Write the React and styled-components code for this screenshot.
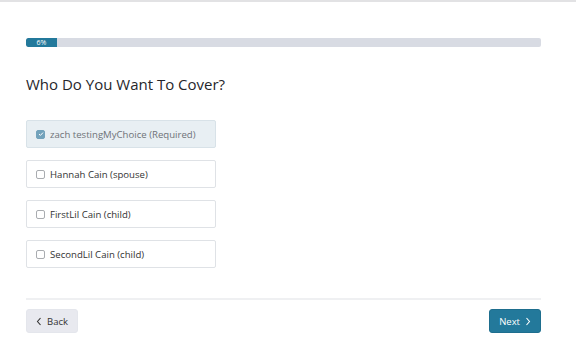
import React from 'react';
import styled, { createGlobalStyle } from 'styled-components';

const GlobalStyle = createGlobalStyle`
    html, body {
        margin: 0;
        padding: 0;
        background: #fff;
        font-family: "Open Sans", "Noto Sans", sans-serif;
    }
`;

const Page = styled.div`
    width: 576px;
    height: 348px;
    box-sizing: border-box;
    border-top: 2px solid #e2e2e4;
    padding: 36px 35px 0 26px;
`;

const Track = styled.div`
    height: 9px;
    background: #d8dbe3;
    border-radius: 2px;
    overflow: hidden;
    display: flex;
`;

const Fill = styled.div`
    background: #23799b;
    color: #fff;
    font-size: 7px;
    line-height: 9px;
    text-align: center;
    border-radius: 2px 0 0 2px;
`;

const Heading = styled.h1`
    margin: 26px 0 0;
    font-size: 15px;
    font-weight: 400;
    color: #26262b;
    line-height: 22px;
`;

const Options = styled.div`
    margin-top: 25px;
    display: flex;
    flex-direction: column;
    gap: 12px;
    width: 190px;
`;

const Option = styled.label`
    display: flex;
    align-items: center;
    gap: 5px;
    height: 28px;
    box-sizing: border-box;
    padding: 0 9px;
    border: 1px solid ${p => (p.$locked ? '#d8e2e8' : '#dfe2e6')};
    border-radius: 2px;
    background: ${p => (p.$locked ? '#e8eff3' : '#fff')};
    font-size: 9.6px;
    color: ${p => (p.$locked ? '#6f7378' : '#333')};
`;

const Box = styled.span`
    width: 9px;
    height: 9px;
    border-radius: 2px;
    box-sizing: border-box;
    border: 1px solid ${p => (p.$checked ? '#72a2bb' : '#a9acb0')};
    background: ${p => (p.$checked ? '#72a2bb' : '#fff')};
    display: flex;
    align-items: center;
    justify-content: center;
`;

const Divider = styled.div`
    margin-top: 30px;
    height: 2px;
    background: #eff0f2;
`;

const Footer = styled.div`
    margin-top: 9px;
    display: flex;
    justify-content: space-between;
`;

const Button = styled.button`
    display: flex;
    align-items: center;
    gap: 5px;
    height: 24px;
    box-sizing: border-box;
    padding: 0 9px;
    border: 1px solid ${p => (p.$primary ? '#1e6e8e' : '#e4e6ec')};
    border-radius: 3px;
    background: ${p => (p.$primary ? '#23799b' : '#e8e9ef')};
    color: ${p => (p.$primary ? '#fff' : '#333')};
    font-family: inherit;
    font-size: 9.5px;
`;

const Check = () => (
    <svg width="6" height="6" viewBox="0 0 6 6">
        <path d="M1 3.1 L2.4 4.4 L5 1.6" fill="none" stroke="#fff" strokeWidth="1" />
    </svg>
);

const Chevron = ({ dir }) => (
    <svg width="6" height="9" viewBox="0 0 6 9">
        <path d={dir === 'left' ? 'M4.5 1 L1.5 4.5 L4.5 8' : 'M1.5 1 L4.5 4.5 L1.5 8'} fill="none" stroke="currentColor" strokeWidth="1.1" />
    </svg>
);

const PEOPLE = [
    { name: 'zach testingMyChoice (Required)', locked: true },
    { name: 'Hannah Cain (spouse)' },
    { name: 'FirstLil Cain (child)' },
    { name: 'SecondLil Cain (child)' },
];

function App() {
    const progress = 6;
    return (
        <>
            <GlobalStyle />
            <Page>
                <Track>
                    <Fill style={{ width: '31px' }}>{progress}%</Fill>
                </Track>
                <Heading>Who Do You Want To Cover?</Heading>
                <Options>
                    {PEOPLE.map(p => (
                        <Option key={p.name} $locked={p.locked}>
                            <Box $checked={p.locked}>{p.locked && <Check />}</Box>
                            {p.name}
                        </Option>
                    ))}
                </Options>
                <Divider />
                <Footer>
                    <Button><Chevron dir="left" /> Back</Button>
                    <Button $primary>Next <Chevron dir="right" /></Button>
                </Footer>
            </Page>
        </>
    );
}

export default App;
